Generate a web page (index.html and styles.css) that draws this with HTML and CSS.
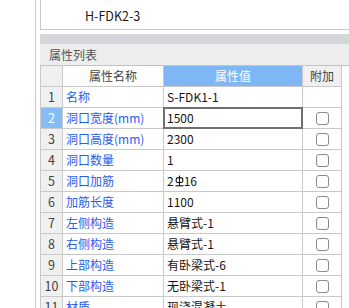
FILE: index.html
```html
<!DOCTYPE html>
<html lang="zh">
<head>
<meta charset="utf-8">
<link rel="stylesheet" href="styles.css">
</head>
<body>
<div class="app">
  <div class="side"></div>
  <div class="main">
    <div class="topbox"><span class="item">H-FDK2-3</span></div>
    <div class="spacer"></div>
    <div class="section">
      <div class="band"></div>
      <div class="title">属性列表</div>
    </div>
    <div class="grid">
      <div class="c num"></div>
      <div class="c hname">属性名称</div>
      <div class="c hval">属性值</div>
      <div class="c hadd">附加</div>

      <div class="c num">1</div>
      <div class="c name">名称</div>
      <div class="c val">S-FDK1-1</div>
      <div class="c add"></div>

      <div class="c num sel">2</div>
      <div class="c name">洞口宽度(mm)</div>
      <div class="c val edit">1500</div>
      <div class="c add"><span class="cb"></span></div>

      <div class="c num">3</div>
      <div class="c name">洞口高度(mm)</div>
      <div class="c val">2300</div>
      <div class="c add"><span class="cb"></span></div>

      <div class="c num">4</div>
      <div class="c name">洞口数量</div>
      <div class="c val">1</div>
      <div class="c add"><span class="cb"></span></div>

      <div class="c num">5</div>
      <div class="c name">洞口加筋</div>
      <div class="c val">2<svg class="rebar" width="9" height="12" viewBox="0 0 9 12"><path d="M4.5 0.5V11" stroke="#111" stroke-width="1.1" fill="none"/><path d="M1.2 4.2Q1.2 2.6 4.5 2.6Q7.8 2.6 7.8 4.2V6.2Q7.8 7.6 4.5 7.6Q1.2 7.6 1.2 6.2Z" stroke="#111" stroke-width="1.1" fill="none"/><path d="M0.5 10.8H8.5" stroke="#111" stroke-width="1.1"/></svg>16</div>
      <div class="c add"><span class="cb"></span></div>

      <div class="c num">6</div>
      <div class="c name">加筋长度</div>
      <div class="c val">1100</div>
      <div class="c add"><span class="cb"></span></div>

      <div class="c num">7</div>
      <div class="c name">左侧构造</div>
      <div class="c val">悬臂式-1</div>
      <div class="c add"><span class="cb"></span></div>

      <div class="c num">8</div>
      <div class="c name">右侧构造</div>
      <div class="c val">悬臂式-1</div>
      <div class="c add"><span class="cb"></span></div>

      <div class="c num">9</div>
      <div class="c name">上部构造</div>
      <div class="c val">有卧梁式-6</div>
      <div class="c add"><span class="cb"></span></div>

      <div class="c num">10</div>
      <div class="c name">下部构造</div>
      <div class="c val">无卧梁式-1</div>
      <div class="c add"><span class="cb"></span></div>

      <div class="c num">11</div>
      <div class="c name">材质</div>
      <div class="c val">现浇混凝土</div>
      <div class="c add"><span class="cb"></span></div>
    </div>
  </div>
</div>
</body>
</html>
```

FILE: styles.css
```css
html, body {
  margin: 0;
  padding: 0;
  background: #ffffff;
}
body {
  width: 349px;
  height: 308px;
  overflow: hidden;
  font-family: "Noto Sans CJK SC", "Noto Sans", sans-serif;
  font-size: 12px;
}
.app {
  display: flex;
  height: 308px;
}
.side {
  width: 35px;
  border-right: 1px solid #c9c9c9;
  background: #ffffff;
  flex: none;
}
.main {
  flex: 1;
  padding-left: 4px;
  display: flex;
  flex-direction: column;
  min-width: 0;
}
.topbox {
  height: 29px;
  border-left: 1px solid #c9c9c9;
  border-bottom: 1px solid #c9c9c9;
  display: flex;
  align-items: center;
  padding-left: 44px;
  flex: none;
}
.item {
  font-size: 12.5px;
  color: #1a1a1a;
  line-height: 16px;
  padding-top: 2px;
}
.spacer {
  height: 4px;
  flex: none;
}
.section {
  flex: none;
  border-bottom: 1px solid #c4c4c4;
}
.band {
  height: 10px;
  background: #d5d6da;
}
.title {
  height: 21px;
  background: #ededed;
  color: #555555;
  font-size: 12px;
  line-height: 21px;
  padding-left: 9px;
}
.grid {
  display: grid;
  grid-template-columns: 21px 100px 138px 38px;
  grid-auto-rows: 20px;
  gap: 1px;
  background: #c9c9c9;
  width: 300px;
  border-left: 1px solid #c9c9c9;
  border-right: 1px solid #c9c9c9;
  flex: none;
}
.c {
  background: #ffffff;
  line-height: 20px;
  white-space: nowrap;
  overflow: hidden;
}
.num {
  background: #f0f0f0;
  color: #444444;
  text-align: center;
  font-size: 12.5px;
}
.num.sel {
  background: #86bcf6;
  color: #ffffff;
}
.hname {
  text-align: center;
  color: #444444;
}
.hval {
  text-align: center;
  background: #7fb7f5;
  color: #ffffff;
}
.hadd {
  text-align: center;
  background: #f0f0f0;
  color: #444444;
}
.name {
  color: #2a5cf0;
  padding-left: 3px;
}
.val {
  color: #151515;
  padding-left: 3px;
  display: flex;
  align-items: center;
  overflow: visible;
}
.edit {
  outline: 2px solid #707070;
  outline-offset: -1px;
  position: relative;
}
.rebar {
  margin: 0 0 0 1px;
  flex: none;
}
.add {
  display: flex;
  align-items: center;
  justify-content: center;
}
.cb {
  width: 11px;
  height: 11px;
  border: 1px solid #8a8a8a;
  border-radius: 3px;
  background: #ffffff;
}
```
